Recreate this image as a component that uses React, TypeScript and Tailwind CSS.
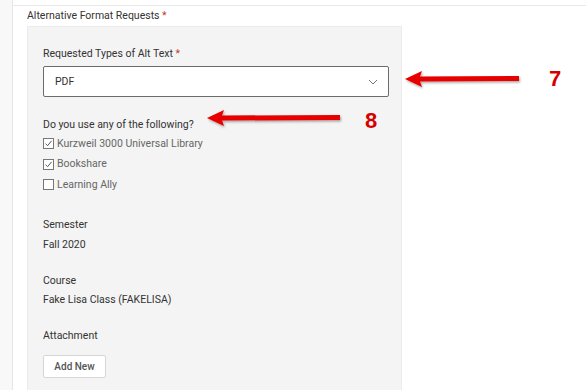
import React from "react";

function Check({ checked }: { checked: boolean }) {
  return (
    <span className="inline-flex h-[11px] w-[11px] items-center justify-center border border-[#777] bg-white">
      {checked && (
        <svg width="9" height="9" viewBox="0 0 9 9">
          <path d="M1.5 4.6 L3.6 6.7 L7.6 1.8" fill="none" stroke="#555" strokeWidth="1" />
        </svg>
      )}
    </span>
  );
}

function Arrow({ width }: { width: number }) {
  return (
    <svg width={width} height="22" viewBox={`0 0 ${width} 22`} style={{ overflow: "visible" }}>
      <defs>
        <filter id={`sh${width}`} x="-10%" y="-50%" width="120%" height="200%">
          <feDropShadow dx="1" dy="1.5" stdDeviation="1" floodColor="#000" floodOpacity="0.35" />
        </filter>
      </defs>
      <g filter={`url(#sh${width})`}>
        <polygon
          points={`1,11 18,3 16,8.5 ${width - 2},8 ${width - 2},13 16,13.5 18,19`}
          fill="#e60000"
        />
      </g>
    </svg>
  );
}

export default function App() {
  return (
    <div
      className="relative h-[390px] w-[586px] overflow-hidden bg-white text-[10.5px]"
      style={{ fontFamily: "Roboto, 'Liberation Sans', sans-serif" }}
    >
      <div className="flex h-full">
        <div className="w-[13px] shrink-0 border-r border-[#e6e6e6] bg-[#f8f8f8]" />
        <div className="mt-[5px] flex-1 border-t border-[#e8e8e8]">
          <div className="pl-[14px] pt-[2px] leading-[16px] text-[#333]">
            Alternative Format Requests <span className="text-[#c0392b]">*</span>
          </div>
          <div className="ml-[14px] mt-[2px] h-[400px] w-[375px] border border-[#ebebeb] bg-[#f4f4f4] px-[15px] pt-[19px]">
            <div className="leading-[16px] text-[#333]">
              Requested Types of Alt Text <span className="text-[#c0392b]">*</span>
            </div>
            <div className="mt-[4px] flex h-[31px] w-[346px] items-center justify-between rounded-[2px] border border-[#6b6b6b] bg-white pl-[11px] pr-[10px] text-[#333]">
              <span>PDF</span>
              <svg width="10" height="6" viewBox="0 0 10 6">
                <path d="M1 1 L5 5 L9 1" fill="none" stroke="#777" strokeWidth="1" />
              </svg>
            </div>
            <div className="mt-[20px] leading-[16px] text-[#333]">Do you use any of the following?</div>
            <div className="mt-[2px] flex flex-col gap-[3.5px] text-[#666]">
              <div className="flex h-[17px] items-center gap-[3px]">
                <Check checked />
                <span>Kurzweil 3000 Universal Library</span>
              </div>
              <div className="flex h-[17px] items-center gap-[3px]">
                <Check checked />
                <span>Bookshare</span>
              </div>
              <div className="flex h-[17px] items-center gap-[3px]">
                <Check checked={false} />
                <span>Learning Ally</span>
              </div>
            </div>
            <div className="mt-[23.5px] leading-[16px] text-[#333]">Semester</div>
            <div className="mt-[4px] leading-[16px] text-[#333]">Fall 2020</div>
            <div className="mt-[20px] leading-[16px] text-[#333]">Course</div>
            <div className="mt-[3px] leading-[16px] text-[#333]">Fake Lisa Class (FAKELISA)</div>
            <div className="mt-[20px] leading-[16px] text-[#333]">Attachment</div>
            <div className="mt-[11px] flex h-[23px] w-[63px] items-center justify-center rounded-[2px] border border-[#d6d6d6] bg-white text-[10px] font-medium text-[#555]">
              Add New
            </div>
          </div>
        </div>
      </div>

      <div className="absolute left-[404px] top-[68px]">
        <Arrow width={117} />
      </div>
      <div
        className="absolute left-[549px] top-[62px] text-[22px] font-bold text-[#d40000]"
        style={{ fontFamily: "'Liberation Sans', Arial, sans-serif" }}
      >
        7
      </div>
      <div className="absolute left-[206px] top-[107px]">
        <Arrow width={136} />
      </div>
      <div
        className="absolute left-[365px] top-[104px] text-[22px] font-bold text-[#d40000]"
        style={{ fontFamily: "'Liberation Sans', Arial, sans-serif" }}
      >
        8
      </div>
    </div>
  );
}
